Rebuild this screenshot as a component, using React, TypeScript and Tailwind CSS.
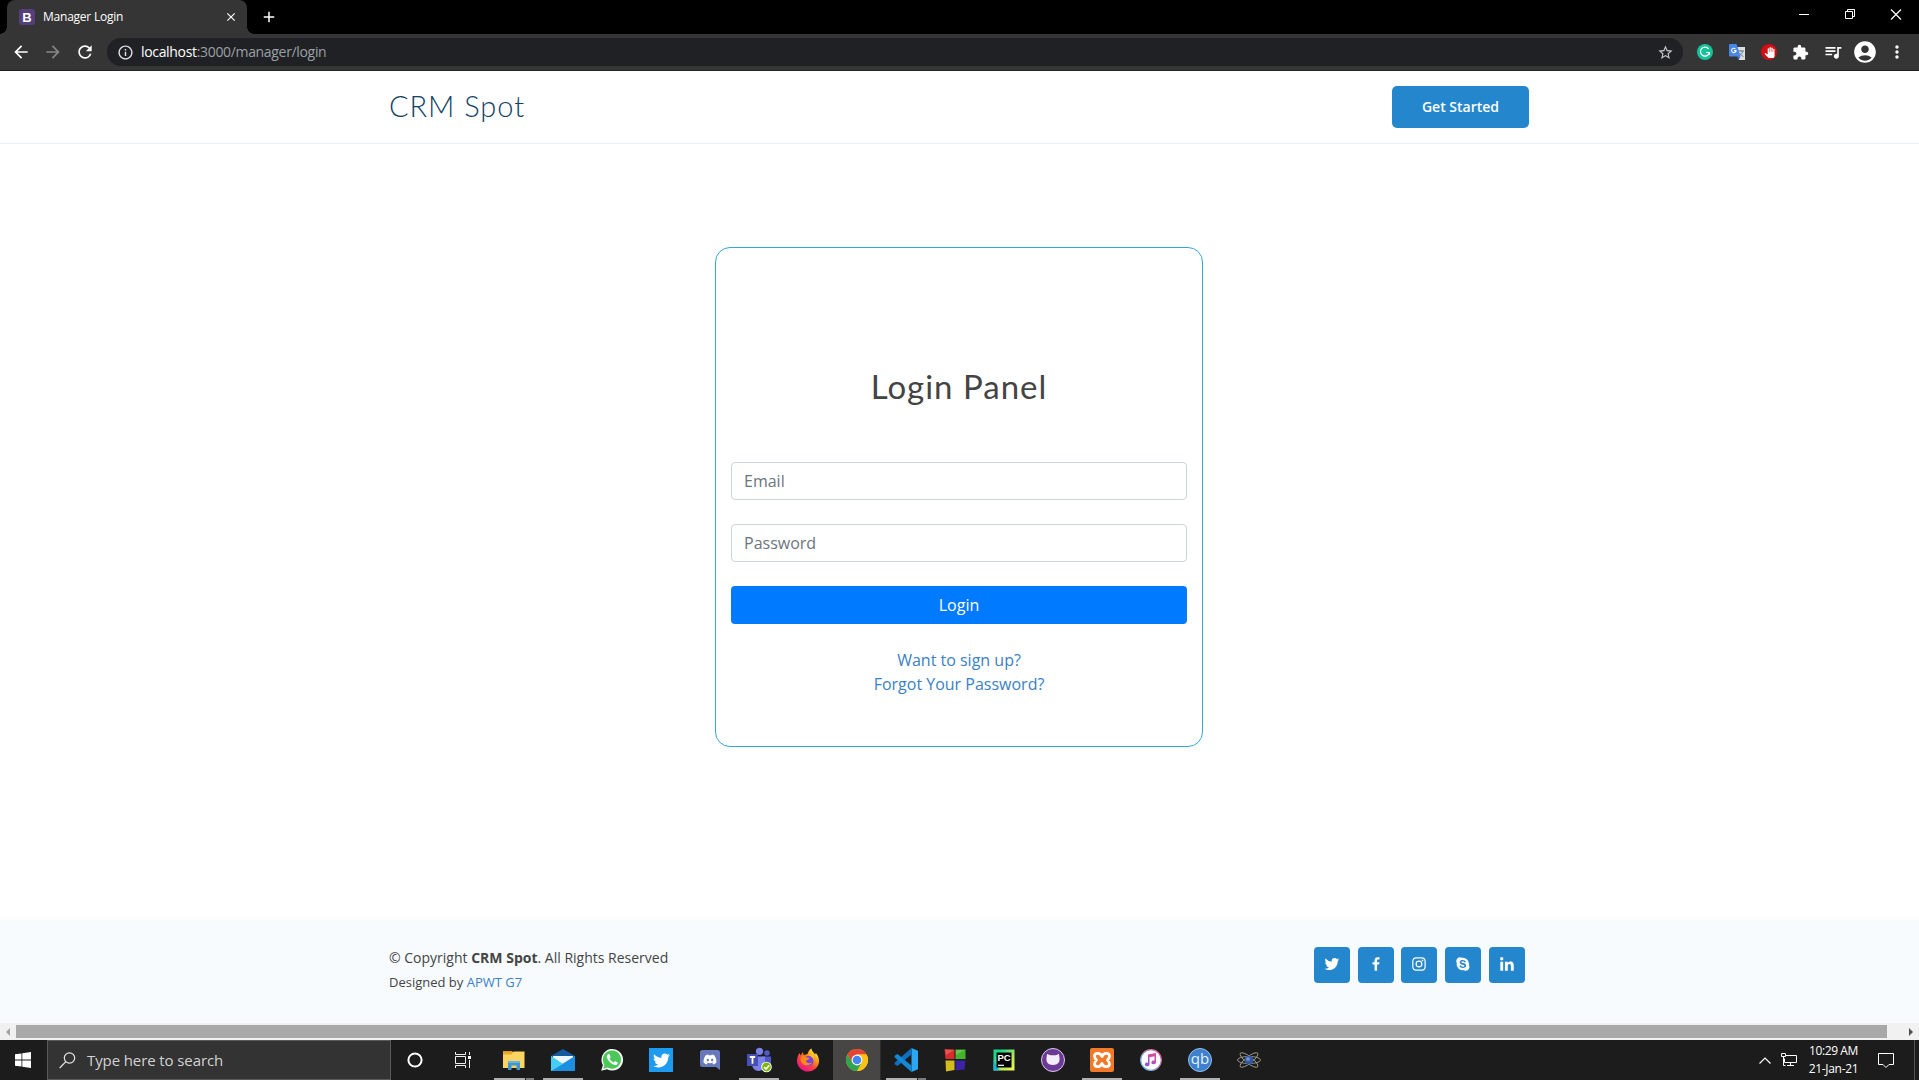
import type { ReactNode } from "react";
import {
  MdArrowBack, MdArrowForward, MdRefresh, MdInfoOutline, MdStarBorder, MdExtension,
  MdQueueMusic, MdAccountCircle, MdMoreVert, MdClose, MdAdd, MdPanTool,
} from "react-icons/md";
import { BiLogoTwitter, BiLogoFacebook, BiLogoInstagram, BiLogoSkype, BiLogoLinkedin } from "react-icons/bi";
import { FaTwitter, FaDiscord } from "react-icons/fa";

function TabStrip() {
  return (
    <div className="flex h-[34px] bg-black text-white">
      <div className="w-[7px]" />
      <div className="relative flex h-full w-[240px] items-center rounded-t-[8px] bg-[#353535] pl-3">
        <div className="absolute bottom-0 -left-[7px] h-[7px] w-[7px] bg-[radial-gradient(circle_at_0_0,#000_6.5px,#353535_7px)]" />
        <div className="absolute bottom-0 -right-[7px] h-[7px] w-[7px] bg-[radial-gradient(circle_at_100%_0,#000_6.5px,#353535_7px)]" />
        <div className="flex h-4 w-4 items-center justify-center rounded-[3px] bg-[#563d7c] font-['Liberation_Sans'] text-[13px] leading-none font-bold">B</div>
        <span className="ml-2 w-[181px] text-[12px] tracking-[-0.23px]">Manager Login</span>
        <MdClose size={14} />
      </div>
      <div className="flex items-center pl-[13px]"><MdAdd size={18} /></div>
      <div className="ml-auto flex items-center pr-[16px] pb-[6px]">
        <svg width="104" height="14" viewBox="0 0 104 14" fill="none" stroke="#fff">
          <path d="M0 7.5h10" />
          <path d="M46.5 4.5h7v7h-7zM48.5 4.5v-2h7v7h-2" />
          <path d="M92 2.5l10 10M102 2.5l-10 10" strokeWidth="1.2" />
        </svg>
      </div>
    </div>
  );
}

function Translate() {
  return (
    <svg width="16" height="16" viewBox="0 0 16 16">
      <path d="M6 3h10v13h-6z" fill="#dcdcdc" />
      <path d="M9 7h6M12 6v1M14 7c-.7 2-2 3.500-3.500 4.500M10.500 9c1 1.800 2.300 2.700 4 3.500" stroke="#607d8b" fill="none" />
      <path d="M0 1q0-1 1-1h6.500l4 12.500H1q-1 0-1-1z" fill="#4a86e8" />
      <path d="M7.500 12.500h4L9.500 16z" fill="#3060c0" />
      <path d="M6.400 4.900A2.200 2.200 0 1 0 7 6.600H5" stroke="#fff" strokeWidth="1.100" fill="none" />
    </svg>
  );
}

function Toolbar() {
  return (
    <div className="flex h-[37px] items-center border-b border-[#202124] bg-[#353535] text-white">
      <div className="flex w-[107px] items-center pl-[11px]">
        <MdArrowBack size={20} />
        <MdArrowForward size={20} className="ml-3 text-[#868686]" />
        <MdRefresh size={20} className="ml-3" />
      </div>
      <div className="flex h-7 w-[1576px] items-center rounded-full bg-[#202124] pr-[9px] pl-[10px]">
        <MdInfoOutline size={17} className="text-[#dfe1e5]" />
        <span className="ml-[7px] pb-px text-[14px] tracking-[-0.33px] text-[#9aa0a6]">
          <span className="text-white">localhost</span>:3000/manager/login
        </span>
        <MdStarBorder size={17} className="ml-auto text-[#c4c7cb]" />
      </div>
      <div className="ml-[14px] flex items-center">
        <svg width="16" height="16" viewBox="0 0 16 16">
          <circle cx="8" cy="8" r="8" fill="#15c39a" />
          <path d="M11.600 4.900A4.500 4.500 0 1 0 12.400 8.500H9M12.400 8.300v2.700" fill="none" stroke="#fff" strokeWidth="1.200" />
        </svg>
        <span className="ml-4"><Translate /></span>
        <span className="ml-4 flex h-4 w-4 items-center justify-center rounded-full bg-[#d40d12]"><MdPanTool size={11} /></span>
        <MdExtension size={17} className="ml-[15px]" />
        <MdQueueMusic size={20} className="ml-[14px]" />
        <MdAccountCircle size={26} className="ml-[9px]" />
        <MdMoreVert size={20} className="ml-[9px]" />
      </div>
    </div>
  );
}

function SiteHeader() {
  return (
    <header className="flex h-[73px] items-center justify-between border-b border-[#e8eff5] pr-[390px] pl-[389px]">
      <h1 className="pb-[4px] font-['Lato'] text-[29px] leading-none font-light tracking-[0.95px] text-[#124265]">CRM Spot</h1>
      <button className="h-[42px] w-[137px] rounded-[5px] bg-[#2487ce] pb-px text-[14px] font-semibold text-white">Get Started</button>
    </header>
  );
}

function LoginCard() {
  return (
    <div className="mt-[103px] ml-[715px] flex h-[500px] w-[488px] flex-col rounded-[15px] border border-[#35a5d8] px-[15px] text-center">
      <h2 className="mt-[118px] h-[40px] font-['Lato'] text-[33px] leading-[40px] tracking-[1px] text-[#444]">Login Panel</h2>
      <input className="mt-[56px] h-[38px] shrink-0 rounded-[4px] border border-[#ced4da] px-3 text-[16px] placeholder:text-[#6c757d]" placeholder="Email" />
      <input className="mt-6 h-[38px] shrink-0 rounded-[4px] border border-[#ced4da] px-3 text-[16px] placeholder:text-[#6c757d]" placeholder="Password" />
      <button className="mt-6 h-[38px] shrink-0 rounded-[4px] bg-[#007bff] text-[16px] text-white">Login</button>
      <a className="mt-6 text-[16px] leading-6 text-[#3b81c4]">Want to sign up?</a>
      <a className="text-[16px] leading-6 text-[#3b81c4]">Forgot Your Password?</a>
    </div>
  );
}

const socials = [BiLogoTwitter, BiLogoFacebook, BiLogoInstagram, BiLogoSkype, BiLogoLinkedin];

function SiteFooter() {
  return (
    <footer className="flex h-[103px] justify-between bg-[#f7fbfe] pr-[394px] pl-[389px] text-[#444] shadow-[0_0_8px_rgba(18,66,101,0.04)]">
      <div className="pt-[27px]">
        <div className="text-[14px] leading-[21px]">© Copyright <strong>CRM Spot</strong>. All Rights Reserved</div>
        <div className="pt-[4px] text-[13px] leading-[20px]">Designed by <a className="text-[#3b81c4]">APWT G7</a></div>
      </div>
      <div className="flex gap-[7.800px] pt-[27px]">
        {socials.map((Icon, i) => (
          <span key={i} className="flex h-9 w-9 items-center justify-center rounded-[4px] bg-[#2487ce] pb-[2px] text-white"><Icon size={18} /></span>
        ))}
      </div>
    </footer>
  );
}

function ScrollBar() {
  return (
    <div className="flex h-[17px] items-center bg-[#f1f1f1]">
      <div className="flex w-4 justify-center"><svg width="4" height="8" viewBox="0 0 4 8"><path d="M4 0v8L0 4z" fill="#a3a3a3" /></svg></div>
      <div className="h-[13px] w-[1871px] bg-[#a8a8a8]" />
      <div className="ml-auto flex w-[17px] justify-center"><svg width="4" height="8" viewBox="0 0 4 8"><path d="M0 0v8l4-4z" fill="#505050" /></svg></div>
    </div>
  );
}

function Svg({ children }: { children: ReactNode }) {
  return <svg width="24" height="24" viewBox="0 0 24 24">{children}</svg>;
}

const Explorer = () => (
  <Svg>
    <path d="M1 3h9l2 2H1z" fill="#d99a1c" />
    <path d="M1 5h9l2-1.500h10.500V20H1z" fill="#fcd462" />
    <path d="M1 6.500V4h8l1.500 1.500L9 6.500z" fill="#e8a82a" />
    <path d="M6 22v-9h12v9h-3.500v-4.500h-5V22z" fill="#3f96d2" />
    <path d="M6 13h12v2H6z" fill="#63b6e8" />
  </Svg>
);

const Mail = () => (
  <Svg>
    <path d="M0 8L12 1l12 7v3H0z" fill="#135a9e" />
    <path d="M2 8h20v10H2z" fill="#eef7fc" />
    <path d="M0 8l12 8.500L24 8v15H0z" fill="#2bb3ee" />
    <path d="M0 23L24 8v15z" fill="#1c90e0" />
    <path d="M0 8l12 8 2-1.200L0 23z" fill="#45cdf7" />
  </Svg>
);

const WhatsApp = () => (
  <Svg>
    <path d="M1.200 22.700l1.700-5.600A10.800 10.800 0 1 1 7.100 21.200z" fill="#f4f4f4" />
    <path d="M3.300 20.700l1.100-4A9.100 9.100 0 1 1 7.600 19.600z" fill="#4cc85a" />
    <path d="M8.300 6.200c-1.200.5-1.900 2-1.300 3.600 1.300 3.600 4.100 6.200 7.700 7.200 1.700.3 3.100-.9 3.100-2.600l-2.700-1.400-1.300 1.500c-2-.8-3.600-2.400-4.300-4l1.200-1.300-1.100-2.700c-.3-.4-.8-.5-1.300-.3z" fill="#fff" />
  </Svg>
);

const Teams = () => (
  <svg width="26" height="26" viewBox="0 0 26 26">
    <circle cx="21" cy="6" r="2.800" fill="#5059c9" />
    <circle cx="13.500" cy="4.300" r="3.600" fill="#7b83eb" />
    <path d="M16 9.500h9v6c0 3-2 5-4.500 5S16 18 16 16z" fill="#5059c9" />
    <path d="M6 9.500h13V17c0 4-3 7-6.500 7S6 21 6 17z" fill="#7b83eb" />
    <path d="M1 7h11v12H1z" fill="#464eb8" />
    <path d="M3.800 10h5.400M6.500 10v6.800" stroke="#fff" strokeWidth="1.800" />
    <circle cx="20.500" cy="20" r="5.300" fill="#fff" />
    <circle cx="20.500" cy="20" r="4.400" fill="#7db700" />
    <path d="M18 20l2 2 3.200-3.600" stroke="#fff" strokeWidth="1.600" fill="none" />
  </svg>
);

const Firefox = () => (
  <Svg>
    <defs>
      <linearGradient id="ff" x1=".85" y1=".05" x2=".2" y2=".95">
        <stop offset="0" stopColor="#fff44f" /><stop offset=".35" stopColor="#ff980e" />
        <stop offset=".65" stopColor="#ff3b4e" /><stop offset="1" stopColor="#e31587" />
      </linearGradient>
    </defs>
    <path d="M23 13A11 10.500 0 1 1 1 13c0-3 1-6 2.500-8l1 2.500L7 4l.5 3C9.500 7 11 6 11.500 6c1-3 2.500-5 4-5.500C15.500 3 18 4.500 19 6.500l.8-1.500C22 7 23 10 23 13z" fill="url(#ff)" />
    <circle cx="12.500" cy="13" r="5" fill="#7542e5" />
    <path d="M5 9c2-1.500 4-1 5.500.5l3 .2c0 2-3 2-3.500 3.300 0 2 3 3 6 1.500-1.500 3-7.500 4.500-10.500 0C4.500 13 4.200 11 5 9z" fill="#ff8a16" />
    <path d="M13 8c2.500-.5 5 2 4.500 5 1.500-3 .5-6.500-2.500-7.500z" fill="#ffbd2f" />
  </Svg>
);

const Chrome = () => (
  <Svg>
    <circle cx="12" cy="12" r="11" fill="#fbc116" />
    <path d="M2.470 6.500A11 11 0 0 1 21.530 6.500H12L7.240 14.750z" fill="#e24436" />
    <path d="M2.470 6.500A11 11 0 0 0 12 23l4.760-8.250H7.240z" fill="#2fa350" />
    <path d="M12 6.500h9.530A11 11 0 0 1 12 23l4.760-8.250z" fill="#fbc116" />
    <circle cx="12" cy="12" r="5.400" fill="#fff" />
    <circle cx="12" cy="12" r="4.300" fill="#4285f4" />
  </Svg>
);

const VsCode = () => (
  <Svg>
    <path d="M17.500 0L24 2.800v18.400L17.500 24z" fill="#2aa7f2" />
    <path d="M17.500 0v6.500L3.500 18 .6 16.300v-1.600z" fill="#0e70c0" />
    <path d="M17.500 24v-6.500L3.500 6 .6 7.700v1.600z" fill="#1388d6" />
  </Svg>
);

const Blocks = () => (
  <Svg>
    <path d="M1.500 1l10 .5V11h-9z" fill="#d92b2b" /><path d="M12.500 1.500h10V11h-10z" fill="#43b32c" />
    <path d="M2.500 12.500h9V22l-8.500 1.500z" fill="#d3bd1c" /><path d="M12.500 12.500h10l-1 9-9 1z" fill="#3c22a6" />
    <path d="M2 1.500l9 .5-8 5zM13 2h9l-9 5z" fill="#fff" opacity=".2" />
  </Svg>
);

const PyCharm = () => (
  <Svg>
    <defs><linearGradient id="pc" x1="0" y1="0" x2="1" y2="1"><stop offset=".2" stopColor="#20d789" /><stop offset=".55" stopColor="#9be567" /><stop offset="1" stopColor="#fcf84a" /></linearGradient></defs>
    <path d="M1.500 1.500h21v21h-21z" fill="url(#pc)" />
    <path d="M1.500 22.500V12l5 8v2.500z" fill="#18b5d8" />
    <path d="M4.500 4.500h15v15h-15z" fill="#000" />
    <path d="M6 17.300h6" stroke="#fff" strokeWidth="1.200" />
    <text x="5.400" y="13" fill="#fff" fontSize="9.500" fontWeight="700" fontFamily="Liberation Sans">PC</text>
  </Svg>
);

const GitHubDesktop = () => (
  <span className="flex h-6 w-6 items-center justify-center rounded-full border-[1.500px] border-[#d9c8e8] bg-[#6e3996] text-[#f3edf8]">
    <svg width="16" height="16" viewBox="0 0 16 16"><path d="M2 2l3.500 1.200h5L14 2l.5 4c.5 4-1.500 7-6.500 7S1 10 1.500 6z" fill="currentColor" /></svg>
  </span>
);

const Xampp = () => (
  <Svg>
    <rect width="24" height="24" rx="2" fill="#f0792a" />
    <path
      d="M12 8.500C11 5 5 4 4.500 8c0 2 1 3 2 4-1 1-2 2-2 4 .5 4 6.500 3 7.500-.5 1 3.500 7 4.500 7.500.5 0-2-1-3-2-4 1-1 2-2 2-4-.5-4-6.500-3-7.500.5z"
      fill="none" stroke="#fff" strokeWidth="2.800" strokeLinejoin="round"
    />
  </Svg>
);

const ITunes = () => (
  <Svg>
    <defs>
      <linearGradient id="it" x1="0" y1="1" x2="1" y2="0"><stop offset="0" stopColor="#5ac8f5" /><stop offset="1" stopColor="#f2568c" /></linearGradient>
      <linearGradient id="itn" x1="0" y1="1" x2="1" y2="0"><stop offset="0" stopColor="#7a5be8" /><stop offset="1" stopColor="#ea4a8c" /></linearGradient>
    </defs>
    <circle cx="12" cy="12" r="10.300" fill="#fafafa" stroke="url(#it)" strokeWidth="1.200" />
    <path d="M9 6.500l8-1.500v9.500a2.300 1.800 0 1 1-1.500-1.700V8.300l-5 1v7.200a2.300 1.800 0 1 1-1.500-1.700z" fill="url(#itn)" />
  </Svg>
);

const QBit = () => (
  <span className="flex h-6 w-6 items-center justify-center rounded-full border border-[#8fc0ee] bg-[#3f80cc] pb-[3px] font-['Open_Sans'] text-[15px] leading-none text-[#e7f1fb]">qb</span>
);

const Atom = () => (
  <Svg>
    <g fill="none" stroke="#a39f90" strokeWidth=".9">
      <ellipse cx="12" cy="12" rx="11.500" ry="3.600" />
      <ellipse cx="12" cy="12" rx="11" ry="3.400" transform="rotate(38 12 12)" />
      <ellipse cx="12" cy="12" rx="11" ry="3.400" transform="rotate(-38 12 12)" />
    </g>
    <circle cx="12" cy="12" r="4.600" fill="#35589c" />
    <circle cx="11" cy="11" r="2" fill="#6d8fd0" />
  </Svg>
);

const apps: { icon: ReactNode; open?: boolean; stacked?: boolean; active?: boolean }[] = [
  { icon: <Explorer />, open: true, stacked: true },
  { icon: <Mail />, open: true },
  { icon: <WhatsApp /> },
  { icon: <span className="flex h-6 w-6 items-center justify-center bg-[#1d9bf0] text-white"><FaTwitter size={17} /></span> },
  { icon: <svg width="24" height="24" viewBox="0 0 24 24"><path d="M4.500 2h15q2.500 0 2.500 2.500V22l-4-3H4.500Q2 19 2 16.500v-12Q2 2 4.500 2z" fill="#6878bd" /><FaDiscord x="5" y="4.500" size={14} color="#fff" /></svg> },
  { icon: <Teams />, open: true },
  { icon: <Firefox /> },
  { icon: <Chrome />, active: true },
  { icon: <VsCode />, open: true, stacked: true },
  { icon: <Blocks /> },
  { icon: <PyCharm /> },
  { icon: <GitHubDesktop /> },
  { icon: <Xampp />, open: true },
  { icon: <ITunes /> },
  { icon: <QBit />, open: true },
  { icon: <Atom /> },
];

function TaskBar() {
  return (
    <div className="flex h-10 bg-[#1c1c1c] text-white">
      <div className="flex w-[46px] items-center justify-center">
        <svg width="16" height="16" viewBox="0 0 16 16" fill="#fff"><path d="M0 2.300L6.500 1.400v6.200H0zM7.300 1.300L16 0v7.600H7.300zM0 8.400h6.500v6.200L0 13.700zM7.300 8.400H16V16l-8.700-1.300z" /></svg>
      </div>
      <div className="ml-px flex w-[344px] items-center border border-[#5a5a5a] bg-[#333] pl-[11px]">
        <svg width="17" height="17" viewBox="0 0 17 17" fill="none" stroke="#e6e6e6" strokeWidth="1.200"><circle cx="10.500" cy="6" r="5.200" /><path d="M6.800 9.700L.7 16" /></svg>
        <span className="ml-[11px] text-[15px] tracking-[-0.1px] text-[#d2d2d2]">Type here to search</span>
      </div>
      <div className="flex w-[99px] items-center pl-4">
        <svg width="16" height="16" viewBox="0 0 16 16"><circle cx="8" cy="8" r="6.600" fill="none" stroke="#fff" strokeWidth="2" /></svg>
        <svg className="ml-8" width="16" height="16" viewBox="0 0 16 16" fill="none" stroke="#f0f0f0"><path d="M.5 0v2.500h10V0M.5 4.500h10v7H.5zM.5 16v-2.500h10V16M14.500 0v3M14.500 8v8" /><path d="M13 4h3v3h-3z" fill="#fff" stroke="none" /></svg>
      </div>
      <div className="flex">
        {apps.map((a, i) => (
          <div key={i} className="relative flex w-[49px] items-center justify-center pr-px">
            {a.active && <span className="absolute inset-y-0 left-0 w-[48px] border-r border-[#2c2c2c] bg-[#484645]" />}
            <span className="relative">{a.icon}</span>
            {a.open && (
              <span className="absolute bottom-0 left-1 flex h-[2px] w-10 gap-px">
                <span className="grow bg-[#b0b0b0]" />
                {a.stacked && <span className="w-2 bg-[#7c7c7c]" />}
              </span>
            )}
          </div>
        ))}
      </div>
      <div className="ml-auto flex items-center">
        <svg width="12" height="7" viewBox="0 0 12 7" fill="none" stroke="#fff" strokeWidth="1.200"><path d="M.5 6.500L6 1l5.500 5.500" /></svg>
        <svg className="ml-[10px]" width="16" height="14" viewBox="0 0 16 14" fill="none" stroke="#fff"><path d="M5 2.500h10.500v7H3.500v-4M9.500 9.500v3M6 12.500h7M.5.5h4v3h-4zM2.500 3.500v9h2" /></svg>
        <div className="ml-[9px] w-[55px] text-center text-[12px] leading-[18px] whitespace-nowrap"><div className="tracking-[-0.400px]">10:29 AM</div><div className="tracking-[-0.300px]">21-Jan-21</div></div>
        <svg className="ml-[17px]" width="16" height="17" viewBox="0 0 16 17" fill="none" stroke="#fff"><path d="M.5 1.500h15v11H11l-3 3-3-3H.5z" /></svg>
        <span className="ml-5 h-10 w-[5px] border-l border-[#555]" />
      </div>
    </div>
  );
}

export default function App() {
  return (
    <div className="flex h-[1080px] w-[1919px] flex-col overflow-hidden bg-white font-['Open_Sans',sans-serif]">
      <TabStrip />
      <Toolbar />
      <SiteHeader />
      <main className="flex h-[776px]"><LoginCard /></main>
      <SiteFooter />
      <ScrollBar />
      <TaskBar />
    </div>
  );
}
